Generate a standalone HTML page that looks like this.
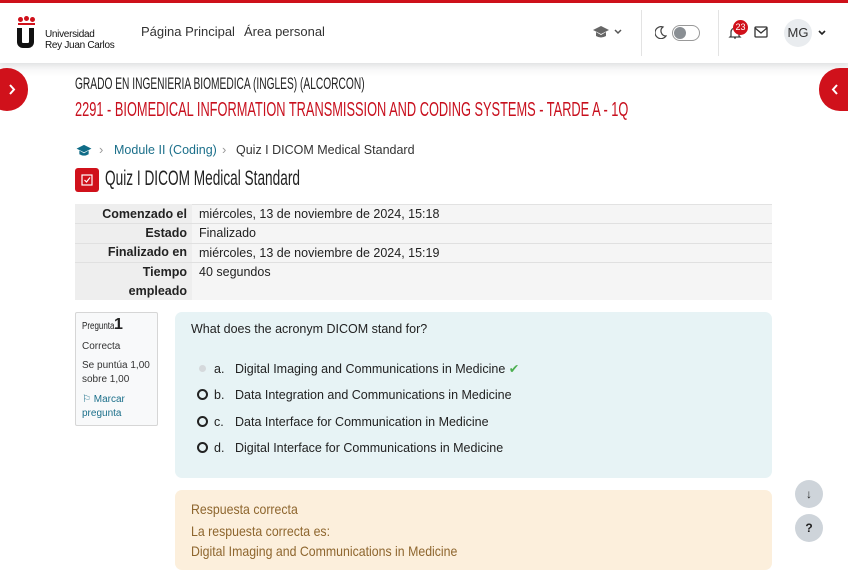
<!DOCTYPE html>
<html><head><meta charset="utf-8"><style>
*{box-sizing:border-box;margin:0;padding:0}
body{width:848px;height:555px;overflow:hidden;background:#fff;font-family:"Liberation Sans",sans-serif;color:#1d2125;position:relative;font-size:13px}
.abs{position:absolute}
.cond{font-family:"Liberation Sans Narrow","Liberation Sans",sans-serif;display:inline-block;transform-origin:left center;white-space:nowrap}
</style></head><body>
<div class="abs" style="left:0;top:0;width:848px;height:3px;background:#d0111b"></div>
<div class="abs" style="left:0;top:3px;width:848px;height:60px;background:#fff;box-shadow:0 2px 6px rgba(0,0,0,.08);z-index:2"></div>
<div class="abs" style="left:0;top:63px;width:848px;height:14px;background:linear-gradient(#f1f2f3,#fff)"></div>
<!-- logo -->
<div style="position:absolute;z-index:3;left:17px;top:17px">
 <div style="position:absolute;left:1px;top:0;width:5px;height:5px;border-radius:50%;background:#d0111b"></div>
 <div style="position:absolute;left:7px;top:-1px;width:5px;height:5px;border-radius:50%;background:#d0111b"></div>
 <div style="position:absolute;left:13px;top:0;width:5px;height:5px;border-radius:50%;background:#d0111b"></div>
 <div style="position:absolute;left:1px;top:6px;width:17px;height:2px;background:#d0111b"></div>
 <div style="position:absolute;left:0;top:11px;width:17px;height:20px;border:5px solid #111;border-top:none;border-radius:0 0 6px 6px"></div>
</div>
<div class="abs" style="z-index:3;left:45px;top:29px;font-size:10px;line-height:11px;color:#111;letter-spacing:-.3px">Universidad<br>Rey Juan Carlos</div>
<div class="abs" style="z-index:3;left:141px;top:24px;font-size:13px;color:#333">Página Principal</div>
<div class="abs" style="z-index:3;left:244px;top:24px;font-size:13px;color:#333">Área personal</div>
<!-- right nav -->
<svg class="abs" style="z-index:3;left:592px;top:25px" width="18" height="14" viewBox="0 0 18 14"><path d="M9 1 L17 5 L9 9 L1 5Z" fill="#666"/><path d="M4 7 V11 Q9 14 14 11 V7 L9 10Z" fill="#666"/></svg>
<svg class="abs" style="z-index:3;left:614px;top:29px" width="8" height="6"><path d="M1 1 L4 4 L7 1" stroke="#555" stroke-width="1.5" fill="none"/></svg>
<div class="abs" style="z-index:3;left:641px;top:10px;width:1px;height:46px;background:#e3e3e3"></div>
<svg class="abs" style="z-index:3;left:655px;top:26px" width="12" height="13"><path d="M8 1 A6 6 0 1 0 11 10 A5 5 0 0 1 8 1Z" stroke="#444" stroke-width="1.2" fill="none"/></svg>
<div class="abs" style="z-index:3;left:672px;top:25px;width:28px;height:16px;border:1px solid #999;border-radius:8px"></div>
<div class="abs" style="z-index:3;left:674px;top:27px;width:12px;height:12px;border-radius:50%;background:#8a8f94"></div>
<div class="abs" style="z-index:3;left:718px;top:10px;width:1px;height:46px;background:#e3e3e3"></div>
<svg class="abs" style="z-index:3;left:728px;top:25px" width="14" height="15"><path d="M3 11 V7 A4 4 0 0 1 11 7 V11 L12 12 H2Z M6 13 H8" stroke="#444" stroke-width="1.3" fill="none"/></svg>
<div class="abs" style="z-index:3;left:733px;top:20px;width:15px;height:15px;border-radius:50%;background:#d0111b;color:#fff;font-size:9px;text-align:center;line-height:15px">23</div>
<svg class="abs" style="z-index:3;left:754px;top:26px" width="14" height="12"><rect x="1" y="1" width="12" height="10" rx="1" stroke="#333" stroke-width="1.3" fill="none"/><path d="M1 2 L7 7 L13 2" stroke="#333" stroke-width="1.3" fill="none"/></svg>
<div class="abs" style="z-index:3;left:784px;top:19px;width:28px;height:28px;border-radius:50%;background:#e9ecef;color:#333;font-size:13px;text-align:center;line-height:28px">MG</div>
<svg class="abs" style="z-index:3;left:818px;top:30px" width="8" height="6"><path d="M1 1 L4 4 L7 1" stroke="#222" stroke-width="1.6" fill="none"/></svg>
<!-- side tabs -->
<div class="abs" style="left:-14px;top:68px;width:42px;height:43px;border-radius:21px;background:#d0111b"></div>
<svg class="abs" style="left:8px;top:84px" width="8" height="11"><path d="M2 1 L6 5.5 L2 10" stroke="#fff" stroke-width="2" fill="none"/></svg>
<div class="abs" style="left:819px;top:68px;width:50px;height:43px;border-radius:21px;background:#d0111b"></div>
<svg class="abs" style="left:831px;top:84px" width="8" height="11"><path d="M6 1 L2 5.5 L6 10" stroke="#fff" stroke-width="2" fill="none"/></svg>
<!-- titles -->
<div class="abs cond" style="left:75px;top:74px;font-size:17px;color:#222;transform:scaleX(.6)">GRADO EN INGENIERIA BIOMEDICA (INGLES) (ALCORCON)</div>
<div class="abs cond" style="left:75px;top:99px;font-size:20px;color:#c8101e;transform:scaleX(.64)">2291 - BIOMEDICAL INFORMATION TRANSMISSION AND CODING SYSTEMS - TARDE A - 1Q</div>
<!-- breadcrumb -->
<svg class="abs" style="left:75px;top:144px" width="18" height="13" viewBox="0 0 18 14"><path d="M9 1 L17 5 L9 9 L1 5Z" fill="#0f6c87"/><path d="M4 7 V11 Q9 14 14 11 V7 L9 10Z" fill="#0f6c87"/></svg>
<div class="abs" style="left:99px;top:142px;font-size:13px;color:#999">›</div>
<div class="abs" style="left:114px;top:143px;font-size:12.5px;color:#1b6f8a">Module II (Coding)</div>
<div class="abs" style="left:222px;top:142px;font-size:13px;color:#999">›</div>
<div class="abs" style="left:236px;top:143px;font-size:12.5px;color:#333">Quiz I DICOM Medical Standard</div>
<div class="abs" style="left:75px;top:168px;width:24px;height:24px;border-radius:3px;background:#d0111b"></div>
<svg class="abs" style="left:81px;top:174px" width="12" height="12"><rect x="1" y="1" width="10" height="10" stroke="#fff" stroke-width="1.2" fill="none"/><path d="M3.5 6 L5.5 8 L9 3.5" stroke="#fff" stroke-width="1.2" fill="none"/></svg>
<div class="abs cond" style="left:105px;top:167px;font-size:21px;color:#222;transform:scaleX(.65)">Quiz I DICOM Medical Standard</div>
<!-- table -->
<div class="abs" style="left:75px;top:204px;width:697px;height:96px;background:#f5f5f5;border-top:1px solid #e2e2e2"></div>
<div class="abs" style="left:75px;top:204px;width:117px;height:96px;background:#eeeeee"></div>
<div class="abs" style="left:75px;top:223px;width:697px;height:1px;background:#e0e0e0"></div>
<div class="abs" style="left:75px;top:243px;width:697px;height:1px;background:#e0e0e0"></div>
<div class="abs" style="left:75px;top:262px;width:697px;height:1px;background:#e0e0e0"></div>
<div class="abs" style="left:75px;top:205px;width:112px;text-align:right;font-weight:bold;font-size:12.5px;line-height:19.2px;color:#222">Comenzado el<br>Estado<br>Finalizado en<br>Tiempo<br>empleado</div>
<div class="abs" style="left:199px;top:205px;font-size:12.5px;line-height:19.4px;color:#222">miércoles, 13 de noviembre de 2024, 15:18<br>Finalizado<br>miércoles, 13 de noviembre de 2024, 15:19<br>40 segundos</div>
<!-- question info -->
<div class="abs" style="left:75px;top:312px;width:83px;height:114px;background:#f8f9fa;border:1px solid #d6d6d6;border-radius:2px"></div>
<div class="abs cond" style="left:82px;top:321px;font-size:10px;color:#222;transform:scaleX(.8)">Pregunta</div>
<div class="abs" style="left:114px;top:316px;font-size:16px;font-weight:bold;color:#222">1</div>
<div class="abs" style="left:82px;top:340px;font-size:10px;color:#333;line-height:13.5px">Correcta</div>
<div class="abs" style="left:82px;top:359px;font-size:10px;color:#333;line-height:13.5px">Se puntúa 1,00<br>sobre 1,00</div>
<div class="abs" style="left:82px;top:393px;font-size:10px;color:#1b6f8a;line-height:13.5px">⚐ Marcar<br>pregunta</div>
<!-- question -->
<div class="abs" style="left:175px;top:312px;width:597px;height:166px;background:#e7f3f5;border-radius:7px"></div>
<div class="abs" style="left:191px;top:322px;font-size:12.5px;color:#222">What does the acronym DICOM stand for?</div>
<div class="abs" style="left:199px;top:365px;width:7px;height:7px;border-radius:50%;background:#d5d9dc"></div>
<div class="abs" style="left:197px;top:389px;width:11px;height:11px;border-radius:50%;border:2px solid #222"></div>
<div class="abs" style="left:197px;top:416px;width:11px;height:11px;border-radius:50%;border:2px solid #222"></div>
<div class="abs" style="left:197px;top:442px;width:11px;height:11px;border-radius:50%;border:2px solid #222"></div>
<div class="abs" style="left:214px;top:356px;font-size:12.5px;line-height:26.3px;color:#222">a.<br>b.<br>c.<br>d.</div>
<div class="abs" style="left:235px;top:356px;font-size:12.5px;line-height:26.3px;color:#222">Digital Imaging and Communications in Medicine <span style="color:#4caf50">✔</span><br>Data Integration and Communications in Medicine<br>Data Interface for Communication in Medicine<br>Digital Interface for Communications in Medicine</div>
<!-- feedback -->
<div class="abs" style="left:175px;top:490px;width:597px;height:80px;background:#fcefdc;border-radius:7px"></div>
<div class="abs cond" style="left:191px;top:499px;font-size:14px;color:#8e662e;transform:scaleX(.88);line-height:20px">Respuesta correcta</div>
<div class="abs cond" style="left:191px;top:521px;font-size:14px;color:#8e662e;transform:scaleX(.88);line-height:20px">La respuesta correcta es:<br>Digital Imaging and Communications in Medicine</div>
<!-- floating -->
<div class="abs" style="left:795px;top:480px;width:28px;height:28px;border-radius:50%;background:#ced4da;color:#222;text-align:center;line-height:28px;font-size:12px;font-weight:bold">↓</div>
<div class="abs" style="left:795px;top:514px;width:28px;height:28px;border-radius:50%;background:#ced4da;color:#222;text-align:center;line-height:28px;font-size:12px;font-weight:bold">?</div>
</body></html>
